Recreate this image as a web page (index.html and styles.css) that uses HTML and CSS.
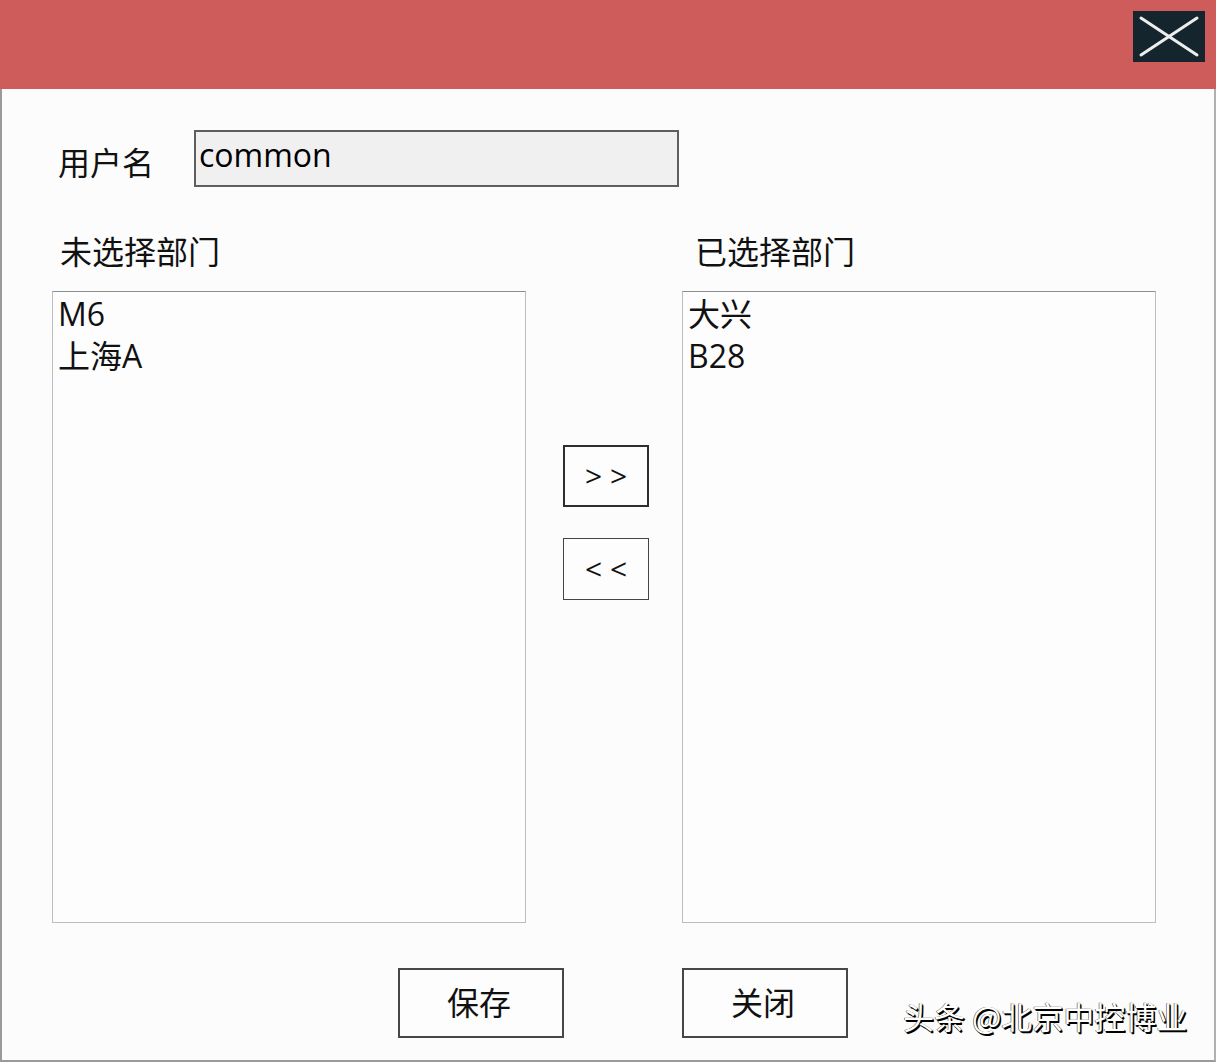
FILE: index.html
```html
<!DOCTYPE html>
<html lang="zh-CN">
<head>
<meta charset="utf-8">
<title>部门选择</title>
<link rel="stylesheet" href="styles.css">
</head>
<body>
<div class="window">
  <div class="titlebar">
    <div class="close">
      <svg width="72" height="51" viewBox="0 0 72 51">
        <line x1="8" y1="7" x2="64" y2="44" stroke="#eeeeee" stroke-width="3" stroke-linecap="round"/>
        <line x1="64" y1="7" x2="8" y2="44" stroke="#eeeeee" stroke-width="3" stroke-linecap="round"/>
      </svg>
    </div>
  </div>
  <div class="content">
    <div class="user-row">
      <div class="user-label">用户名</div>
      <div class="user-input">common</div>
    </div>
    <div class="lists">
      <div class="col">
        <div class="col-label left-label">未选择部门</div>
        <div class="listbox">
          <div class="item">M6</div>
          <div class="item">上海A</div>
        </div>
      </div>
      <div class="mid">
        <div class="move-btn strong">&gt; &gt;</div>
        <div class="move-btn">&lt; &lt;</div>
      </div>
      <div class="col">
        <div class="col-label right-label">已选择部门</div>
        <div class="listbox">
          <div class="item">大兴</div>
          <div class="item">B28</div>
        </div>
      </div>
    </div>
    <div class="actions">
      <div class="action-btn">保存</div>
      <div class="action-btn">关闭</div>
    </div>
  </div>
  <div class="watermark">头条 @北京中控博业</div>
</div>
</body>
</html>
```

FILE: styles.css
```css
html, body {
  margin: 0;
  padding: 0;
  background: #ffffff;
}
body {
  font-family: "Open Sans", "Noto Sans CJK SC", sans-serif;
  font-size: 32px;
  line-height: 42px;
  color: #111111;
}
.window {
  position: relative;
  width: 1216px;
  height: 1062px;
  background: #fcfcfc;
  overflow: hidden;
  display: flex;
  flex-direction: column;
}
.titlebar {
  height: 89px;
  flex: none;
  background: #cd5c5a;
  display: flex;
  justify-content: flex-end;
  align-items: flex-start;
  padding: 11px 11px 0 0;
  box-sizing: border-box;
}
.close {
  width: 72px;
  height: 51px;
  background: #15252e;
  display: flex;
}
.content {
  flex: 1;
  box-sizing: border-box;
  border-left: 2px solid #9a9a9a;
  border-right: 2px solid #b0b0b0;
  border-bottom: 2px solid #9a9a9a;
  padding-top: 41px;
}
.user-row {
  display: flex;
  align-items: flex-start;
  padding-left: 56px;
  height: 57px;
}
.user-label {
  width: 136px;
  margin-top: 12px;
}
.user-input {
  width: 485px;
  height: 57px;
  box-sizing: border-box;
  border: 2px solid #5e5e5e;
  background: #f0f0f0;
  padding: 2px 0 0 3px;
  color: #000;
}
.lists {
  display: grid;
  grid-template-columns: 474px 156px 474px;
  margin-left: 50px;
  margin-top: 44px;
}
.col {
  display: flex;
  flex-direction: column;
}
.col-label {
  height: 42px;
  margin-bottom: 18px;
}
.left-label { padding-left: 8px; }
.right-label { padding-left: 13px; }
.listbox {
  height: 632px;
  box-sizing: border-box;
  border: 1px solid #bdbdbd;
  border-top-color: #8e8e8e;
  background: #fdfdfd;
  padding: 1px 0 0 5px;
}
.mid {
  display: flex;
  flex-direction: column;
  padding-top: 214px;
  padding-left: 37px;
  gap: 31px;
}
.move-btn {
  width: 86px;
  height: 62px;
  box-sizing: border-box;
  border: 1px solid #444;
  background: #fdfdfd;
  display: flex;
  align-items: center;
  justify-content: center;
  font-size: 30px;
  color: #111;
}
.move-btn.strong {
  border: 2px solid #2e2e2e;
}
.actions {
  display: flex;
  gap: 118px;
  margin-top: 45px;
  padding-left: 396px;
}
.action-btn {
  width: 166px;
  height: 70px;
  box-sizing: border-box;
  border: 2px solid #474747;
  background: #fdfdfd;
  display: flex;
  align-items: center;
  justify-content: center;
  padding-right: 4px;
}
.watermark {
  position: absolute;
  left: 903px;
  top: 996px;
  font-family: "Noto Sans CJK SC", sans-serif;
  font-size: 31px;
  line-height: 40px;
  color: #ffffff;
  text-shadow: 1.5px 1.5px 0 #000, 1px 1px 1px #000, -0.5px 0 0 #333;
  white-space: nowrap;
}
```
